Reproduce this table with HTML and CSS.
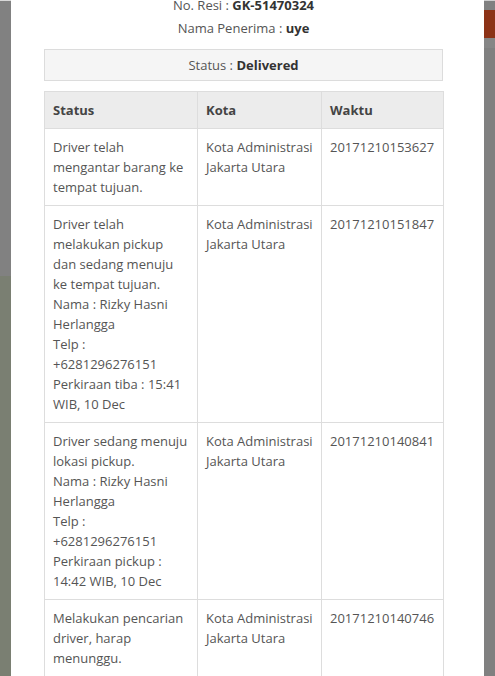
FILE: index.html
```html
<!DOCTYPE html>
<html>
<head>
<meta charset="utf-8">
<link rel="stylesheet" href="styles.css">
</head>
<body>
<div class="page">
  <div class="side side-left">
    <div class="sl-top"></div>
    <div class="sl-bottom"></div>
  </div>
  <div class="modal">
    <div class="info">
      <div class="info-line">No. Resi : <b>GK-51470324</b></div>
      <div class="info-line second">Nama Penerima : <b>uye</b></div>
    </div>
    <div class="status-box">Status : <b>Delivered</b></div>
    <table class="track">
      <colgroup>
        <col class="c1"><col class="c2"><col class="c3">
      </colgroup>
      <thead>
        <tr><th>Status</th><th>Kota</th><th>Waktu</th></tr>
      </thead>
      <tbody>
        <tr>
          <td>Driver telah mengantar barang ke tempat tujuan.</td>
          <td>Kota Administrasi Jakarta Utara</td>
          <td>20171210153627</td>
        </tr>
        <tr>
          <td>Driver telah melakukan pickup dan sedang menuju ke tempat tujuan.<br>Nama : Rizky Hasni Herlangga<br>Telp : +6281296276151<br>Perkiraan tiba : 15:41 WIB, 10 Dec</td>
          <td>Kota Administrasi Jakarta Utara</td>
          <td>20171210151847</td>
        </tr>
        <tr>
          <td>Driver sedang menuju lokasi pickup.<br>Nama : Rizky Hasni Herlangga<br>Telp : +6281296276151<br>Perkiraan pickup : 14:42 WIB, 10 Dec</td>
          <td>Kota Administrasi Jakarta Utara</td>
          <td>20171210140841</td>
        </tr>
        <tr>
          <td>Melakukan pencarian driver, harap menunggu.</td>
          <td>Kota Administrasi Jakarta Utara</td>
          <td>20171210140746</td>
        </tr>
      </tbody>
    </table>
  </div>
  <div class="side side-right">
    <div class="sr-bar"></div>
  </div>
</div>
</body>
</html>
```

FILE: styles.css
```css
html, body {
  margin: 0;
  padding: 0;
  height: 676px;
  overflow: hidden;
  background: #7f7f7f;
}
.page {
  display: flex;
  height: 676px;
  font-family: "Open Sans", "Liberation Sans", sans-serif;
  font-size: 13px;
  line-height: 20px;
  color: #555;
}
.side {
  width: 11px;
  flex: none;
  display: flex;
  flex-direction: column;
}
.sl-top {
  height: 275px;
  background: #818181;
  border-top: 1px solid #d8d8d8;
}
.sl-bottom {
  flex: 1;
  background: #7a7f72;
}
.side-right {
  background: #808080;
  border-top: 1px solid #cfcfcf;
}
.sr-bar {
  margin-top: 9px;
  height: 28px;
  background: #8c3216;
  border-bottom: 10px solid #868686;
}
.modal {
  width: 473px;
  flex: none;
  background: #fff;
  padding: 0 41px 0 33px;
  box-sizing: border-box;
  overflow: hidden;
}
.info {
  margin-top: -5px;
  text-align: center;
}
.info b, .status-box b {
  color: #333;
  font-weight: 700;
}
.info-line.second {
  margin-top: 3px;
}
.status-box {
  margin-top: 11px;
  border: 1px solid #dcdcdc;
  background: #f5f5f5;
  text-align: center;
  padding: 5px 0;
}
.track {
  margin-top: 10px;
  width: 399px;
  border-collapse: collapse;
  table-layout: fixed;
  border: 1px solid #ddd;
}
.c1 { width: 153px; }
.c2 { width: 124px; }
.c3 { width: 122px; }
.track th, .track td {
  border: 1px solid #ddd;
  padding: 8px;
  text-align: left;
  vertical-align: top;
}
.track th {
  background: #ececec;
  color: #444;
  font-weight: 700;
}
```
